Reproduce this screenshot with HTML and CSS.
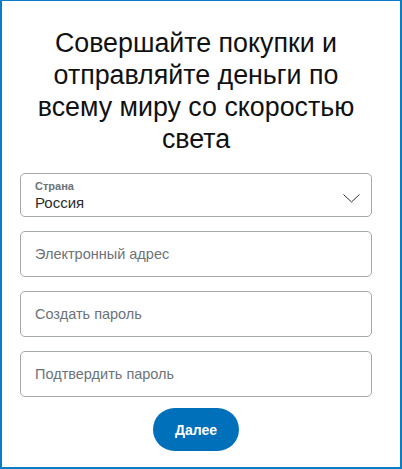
FILE: index.html
```html
<!DOCTYPE html>
<html>

<head>
  <title>Регистрация</title>
  <meta name="viewport" content="width=device-width, initial-scale=1">
  <link rel="stylesheet" href="styles.css">
</head>

<body>
  <div id="signup">
    <h1>Совершайте покупки и отправляйте деньги по всему миру со скоростью света</h1>
    <form id="signup-form">
      <div class="field select-field">
        <span class="field-label">Страна</span>
        <span class="field-value">Россия</span>
        <svg class="chevron" width="17" height="9" viewBox="0 0 17 9">
          <path d="M0.5 0.5 L8.5 8 L16.5 0.5" fill="none" stroke="#2c2e2f" stroke-width="1"/>
        </svg>
      </div>
      <input type="email" class="field" placeholder="Электронный адрес">
      <input type="password" class="field" placeholder="Создать пароль">
      <input type="password" class="field" placeholder="Подтвердить пароль">
      <button type="submit">Далее</button>
    </form>
  </div>
</body>

</html>
```

FILE: styles.css
```css
body {
  margin: 0;
  padding: 0;
  font-family: "Liberation Sans", Arial, sans-serif;
  background: #ffffff;
}

#signup {
  box-sizing: border-box;
  width: 402px;
  height: 469px;
  border: 2px solid #0a7ec4;
  border-top-width: 1px;
  padding: 26px 28px 0 18px;
}

h1 {
  margin: 0 0 18px 0;
  font-size: 26.8px;
  line-height: 32px;
  font-weight: normal;
  text-align: center;
  color: #111111;
}

form {
  display: flex;
  flex-direction: column;
  gap: 14px;
}

.field {
  box-sizing: border-box;
  width: 100%;
  height: 46px;
  margin: 0;
  padding: 0 14px;
  border: 1px solid #a3a8ab;
  border-radius: 5px;
  background: #ffffff;
  font-family: inherit;
  font-size: 14.5px;
  color: #2c2e2f;
  outline: none;
}

.field::placeholder {
  color: #6c7378;
}

.select-field {
  position: relative;
  height: 44px;
  display: flex;
  flex-direction: column;
  justify-content: center;
  padding-top: 1px;
}

.field-label {
  font-size: 11px;
  font-weight: bold;
  color: #6c7378;
  line-height: 14px;
}

.field-value {
  font-size: 15px;
  line-height: 19px;
  color: #2c2e2f;
}

.chevron {
  position: absolute;
  right: 11px;
  top: 20px;
}

button {
  align-self: center;
  width: 86px;
  height: 43px;
  margin-top: -3px;
  border: none;
  border-radius: 22px;
  background-color: #0070ba;
  color: #ffffff;
  font-family: inherit;
  font-size: 14px;
  font-weight: bold;
  cursor: pointer;
}
```
